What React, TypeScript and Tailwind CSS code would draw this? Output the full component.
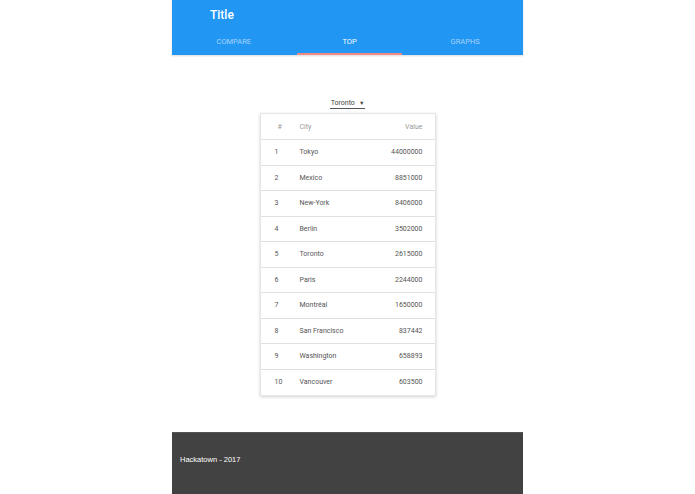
const rows: [number, string, number][] = [
  [1, 'Tokyo', 44000000],
  [2, 'Mexico', 8851000],
  [3, 'New-York', 8406000],
  [4, 'Berlin', 3502000],
  [5, 'Toronto', 2615000],
  [6, 'Paris', 2244000],
  [7, 'Montréal', 1650000],
  [8, 'San Francisco', 837442],
  [9, 'Washington', 658893],
  [10, 'Vancouver', 603500],
]

const tabs = ['COMPARE', 'TOP', 'GRAPHS']

export default function App() {
  return (
    <div className="min-h-screen bg-white flex justify-center" style={{ fontFamily: 'Roboto, "Liberation Sans", sans-serif' }}>
      <div className="w-[351px] flex flex-col">
        {/* ── Header ───────────────────────────── */}
        <header className="bg-[#2196f3] h-[55px] flex flex-col shadow-[0_1px_2px_rgba(0,0,0,0.15)]">
          <div className="h-[28px] flex items-center pl-[38px] pt-[2px]">
            <span className="text-white text-[12px] font-medium">Title</span>
          </div>
          <div className="flex flex-1 pl-[4px]">
            {tabs.map(t => (
              <div key={t} className="flex-1 flex flex-col items-center">
                <div className={`flex-1 flex items-center pt-[2px] text-[7.5px] ${t === 'TOP' ? 'text-white' : 'text-[#a8d4fa]'}`}>{t}</div>
                <div className={`h-[2px] w-[105px] ${t === 'TOP' ? 'bg-[#f08a84]' : ''}`} />
              </div>
            ))}
          </div>
        </header>

        {/* ── Content ──────────────────────────── */}
        <main className="h-[377px] flex flex-col items-center pt-[43px]">
          <div className="flex items-center gap-[4px] border-b border-[#555] px-[1px] h-[11px] text-[7px] text-[#444]">
            <span>Toronto</span>
            <span className="text-[5.5px]">▼</span>
          </div>
          <div className="mt-[4px] w-[176px] bg-white border border-[#e6e6e6] shadow-[0_1px_3px_rgba(0,0,0,0.18)] text-[7px]">
            <div className="h-[26px] flex items-center text-[#999] border-b border-[#e0e0e0] pt-[1px]">
              <span className="w-[39px] pl-[17px]">#</span>
              <span className="flex-1">City</span>
              <span className="pr-[12px]">Value</span>
            </div>
            {rows.map(([n, city, v], i) => (
              <div key={n} className={`h-[25.5px] flex items-center text-[#555] ${i < rows.length - 1 ? 'border-b border-[#e0e0e0]' : ''}`}>
                <span className="w-[39px] pl-[14px]">{n}</span>
                <span className="flex-1">{city}</span>
                <span className="pr-[12px]">{v}</span>
              </div>
            ))}
          </div>
        </main>

        {/* ── Footer ───────────────────────────── */}
        <footer className="bg-[#424242] flex-1 min-h-[62px] pt-[23px] pl-[8px] border-t border-[#555] text-[7.5px] leading-none">
          <span className="text-white" style={{ fontFamily: '"Liberation Sans", Arial, sans-serif' }}>Hackatown - 2017</span>
        </footer>
      </div>
    </div>
  )
}
